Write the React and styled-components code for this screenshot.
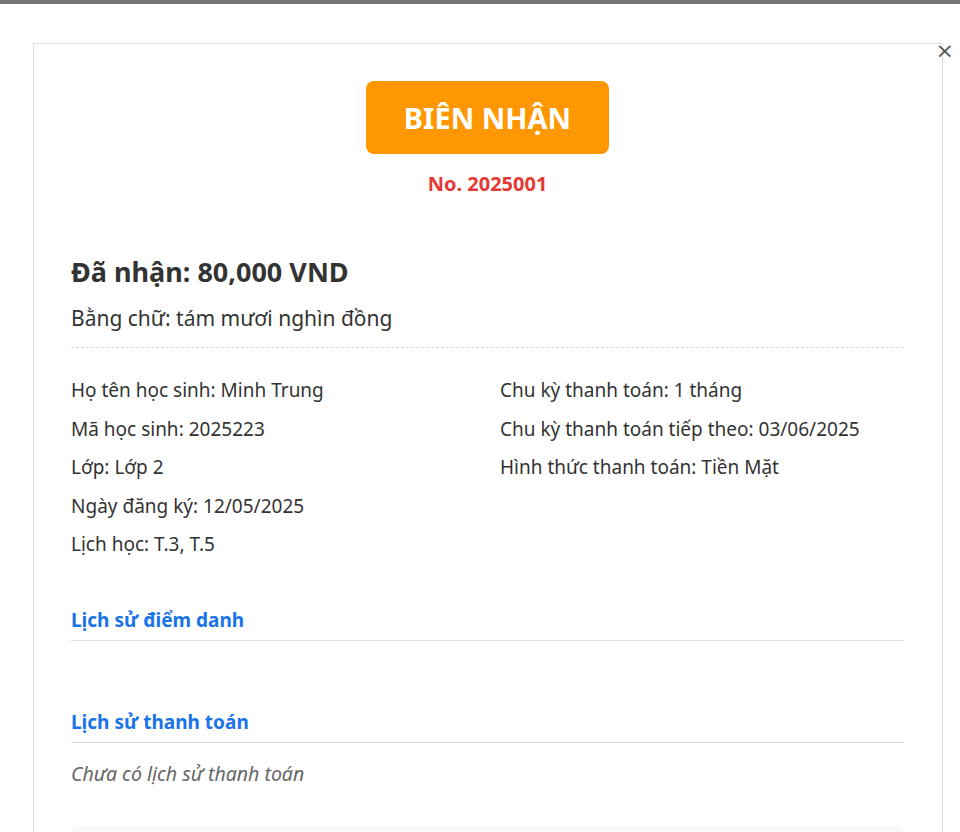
import React from "react";
import styled, { createGlobalStyle } from "styled-components";

const GlobalStyle = createGlobalStyle`
  html, body {
    margin: 0;
    padding: 0;
    background: #777;
    font-family: "Noto Sans", "Open Sans", Arial, sans-serif;
    color: #333;
  }
`;

const receipt = {
  no: "2025001",
  amount: "80,000 VND",
  words: "tám mươi nghìn đồng",
  left: [
    ["Họ tên học sinh", "Minh Trung"],
    ["Mã học sinh", "2025223"],
    ["Lớp", "Lớp 2"],
    ["Ngày đăng ký", "12/05/2025"],
    ["Lịch học", "T.3, T.5"]
  ],
  right: [
    ["Chu kỳ thanh toán", "1 tháng"],
    ["Chu kỳ thanh toán tiếp theo", "03/06/2025"],
    ["Hình thức thanh toán", "Tiền Mặt"]
  ]
};

const App = () => (
  <>
    <GlobalStyle />
    <Page>
      <Modal>
        <CloseButton aria-label="close">×</CloseButton>
        <Card>
          <Header>
            <TitleBadge>BIÊN NHẬN</TitleBadge>
            <ReceiptNo>No. {receipt.no}</ReceiptNo>
          </Header>

          <Amount>Đã nhận: {receipt.amount}</Amount>
          <Words>Bằng chữ: {receipt.words}</Words>

          <InfoGrid>
            <InfoCol>
              {receipt.left.map(([label, value]) => (
                <InfoLine key={label}>
                  {label}: {value}
                </InfoLine>
              ))}
            </InfoCol>
            <InfoCol>
              {receipt.right.map(([label, value]) => (
                <InfoLine key={label}>
                  {label}: {value}
                </InfoLine>
              ))}
            </InfoCol>
          </InfoGrid>

          <Section>
            <SectionTitle>Lịch sử điểm danh</SectionTitle>
            <SectionBody />
          </Section>

          <Section>
            <SectionTitle>Lịch sử thanh toán</SectionTitle>
            <EmptyNote>Chưa có lịch sử thanh toán</EmptyNote>
          </Section>

          <NoteBox />
        </Card>
      </Modal>
    </Page>
  </>
);

const Page = styled.div`
  height: 832px;
  padding-top: 4px;
  box-sizing: border-box;
  overflow: hidden;
`;

const Modal = styled.div`
  position: relative;
  background: #fff;
  height: 100%;
  padding: 39px 17px 0 33px;
  box-sizing: border-box;
`;

const CloseButton = styled.button`
  position: absolute;
  top: 36px;
  right: 6px;
  border: none;
  background: transparent;
  font-family: "DejaVu Sans", sans-serif;
  font-size: 22px;
  line-height: 1;
  color: #5a5a5a;
  padding: 0;
  cursor: pointer;
`;

const Card = styled.div`
  border: 1px solid #ddd;
  border-bottom: none;
  padding: 37px 38px 40px 37px;
  min-height: 900px;
`;

const Header = styled.div`
  display: flex;
  flex-direction: column;
  align-items: center;
`;

const TitleBadge = styled.div`
  background: #ff9800;
  color: #fff;
  font-size: 29px;
  font-weight: 700;
  height: 73px;
  width: 243px;
  border-radius: 8px;
  display: flex;
  align-items: center;
  justify-content: center;
`;

const ReceiptNo = styled.div`
  color: #e53935;
  font-size: 20px;
  line-height: 24px;
  font-weight: 700;
  margin-top: 18px;
`;

const Amount = styled.h2`
  font-size: 27px;
  line-height: 36px;
  font-weight: 700;
  margin: 58px 0 0;
  color: #333;
`;

const Words = styled.p`
  font-size: 21px;
  line-height: 28px;
  margin: 14px 0 0;
  padding-bottom: 15px;
  border-bottom: 1px dashed #ddd;
`;

const InfoGrid = styled.div`
  display: grid;
  grid-template-columns: 1fr 1fr;
  gap: 0 25px;
  padding-top: 23px;
`;

const InfoCol = styled.div`
  display: flex;
  flex-direction: column;
`;

const InfoLine = styled.p`
  font-size: 19px;
  line-height: 38.5px;
  margin: 0;
`;

const Section = styled.div`
  margin-top: 43px;
`;

const SectionTitle = styled.h3`
  color: #1a73e8;
  font-size: 19px;
  line-height: 26px;
  font-weight: 700;
  margin: 0;
  padding-bottom: 7px;
  border-bottom: 1px solid #ddd;
`;

const SectionBody = styled.div`
  min-height: 25px;
`;

const EmptyNote = styled.p`
  font-style: italic;
  color: #666;
  font-size: 19.5px;
  line-height: 26px;
  margin: 18px 0 0;
`;

const NoteBox = styled.div`
  margin-top: 39px;
  height: 120px;
  background: #f8f8f8;
  border-radius: 8px;
`;

export default App;
